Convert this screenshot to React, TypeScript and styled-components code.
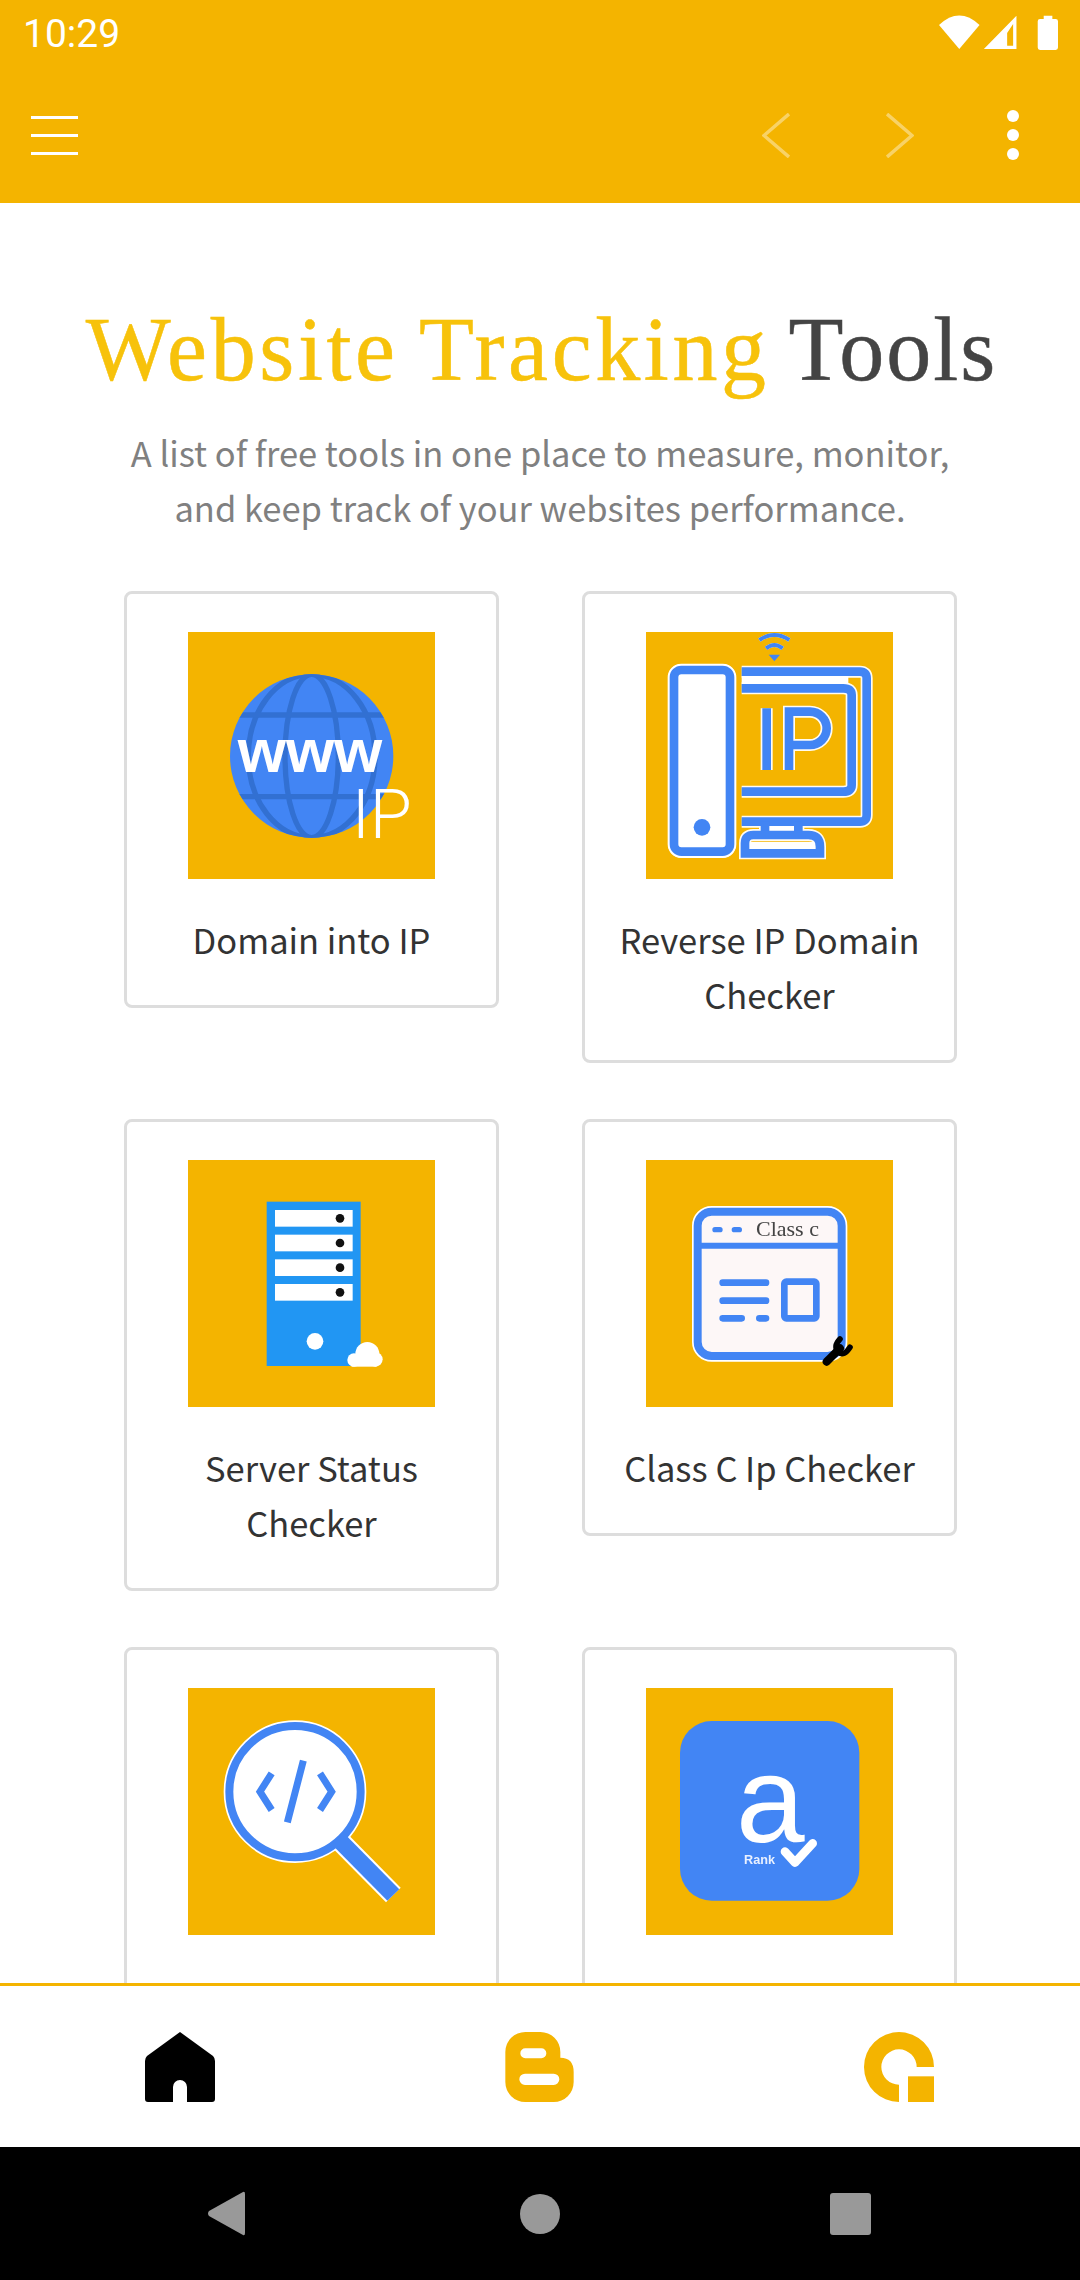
import React from "react"
import styled, { createGlobalStyle } from "styled-components"

const AMBER = "#f4b400"
const BLUE = "#4285f4"

const GlobalStyle = createGlobalStyle`
  html, body {
    margin: 0;
    padding: 0;
    background: #fff;
  }
  body {
    font-family: "Noto Sans CJK JP", "Noto Sans", sans-serif;
  }
`

function GlobeArt() {
  return (
    <Art viewBox="54 36 741 741">
      <clipPath id="globe-clip">
        <circle cx="425" cy="408" r="245" />
      </clipPath>
      <circle cx="425" cy="408" r="245" fill={BLUE} />
      <g clipPath="url(#globe-clip)" fill="none" stroke="#3270d2" strokeWidth="16">
        <ellipse cx="425" cy="408" rx="80" ry="245" />
        <ellipse cx="425" cy="408" rx="190" ry="245" />
        <path d="M170 285H680M170 530H680" />
      </g>
      <text x="203" y="455" fontFamily="Liberation Sans" fontWeight="700" fontSize="186" fill="#fff">
        www
      </text>
      <text x="545" y="655" fontFamily="Roboto" fontWeight="300" fontSize="205" fill="#fff">
        IP
      </text>
    </Art>
  )
}

function ComputerArt() {
  const frames = (
    <>
      <rect x="132" y="150" width="168" height="545" rx="22" />
      <path d="M335 155H690Q710 155 710 175V585Q710 605 690 605H335" />
      <path d="M335 205H640Q665 205 665 225V495Q665 515 640 515H335" />
      <path d="M410 265V450M477 450V275H540A50 50 0 0 1 540 375H477" />
      <path d="M405 605V640M505 605V640" />
      <path d="M345 700V670Q345 645 370 645H535Q570 645 570 680V700Z" />
      <path d="M388 60Q433 30 478 60M408 85Q433 65 458 85" strokeWidth="12" />
    </>
  )
  return (
    <Art viewBox="48 36 741 741">
      <g fill="#fff" stroke="#fff" strokeWidth="38">
        <rect x="132" y="150" width="168" height="545" rx="22" />
      </g>
      <g fill="none" stroke="#fff" strokeWidth="36" opacity="0.95">
        {frames}
      </g>
      <rect x="335" y="168" width="320" height="24" fill="#fff" />
      <rect x="418" y="612" width="74" height="22" fill="#fff" />
      <path d="M355 665H555V690H355Z" fill="#fff" />
      <g fill="none" stroke={BLUE} strokeWidth="26">
        {frames}
      </g>
      <circle cx="216" cy="622" r="25" fill={BLUE} />
      <path d="M416 104H450L433 124Z" fill={BLUE} />
    </Art>
  )
}

function ServerArt() {
  return (
    <Art viewBox="54 30 741 741">
      <rect x="290" y="155" width="282" height="493" fill="#2196f3" />
      {[180, 254, 328, 402].map((y) => (
        <g key={y}>
          <rect x="315" y={y} width="233" height="50" fill="#fff" />
          <circle cx="510" cy={y + 25} r="13" fill="#111" />
        </g>
      ))}
      <circle cx="435" cy="574" r="25" fill="#fff" />
      <g fill="#fff">
        <circle cx="592" cy="612" r="36" />
        <circle cx="552" cy="630" r="20" />
        <circle cx="616" cy="628" r="22" />
        <rect x="545" y="625" width="75" height="25" />
      </g>
    </Art>
  )
}

function ClassCArt() {
  return (
    <Art viewBox="48 30 741 741">
      <rect x="203" y="185" width="432" height="433" rx="42" fill="#fdf7f7" stroke="#fff" strokeWidth="34" />
      <rect x="203" y="185" width="432" height="433" rx="42" fill="#fdf7f7" stroke={BLUE} strokeWidth="24" />
      <path d="M205 287H635" stroke={BLUE} strokeWidth="18" />
      <g stroke={BLUE} strokeWidth="16" strokeLinecap="round">
        <path d="M255 239H270M313 239H328" />
      </g>
      <text x="378" y="258" fontFamily="Liberation Serif" fontSize="66" fill="#444">
        Class c
      </text>
      <g stroke={BLUE} strokeWidth="20" strokeLinecap="round">
        <path d="M278 398H408M278 452H408M278 505H335M388 505H408" />
      </g>
      <rect x="463" y="395" width="96" height="110" rx="6" fill="none" stroke={BLUE} strokeWidth="20" />
      <g fill="none" stroke="#000" strokeLinecap="round">
        <path d="M590 635L630 595" strokeWidth="24" />
        <path d="M630 567Q608 590 626 607Q642 620 660 592" strokeWidth="17" />
      </g>
    </Art>
  )
}

function CodeSearchArt() {
  return (
    <Art viewBox="54 54 741 741">
      <path d="M513 516L670 675" stroke="#fff" strokeWidth="62" />
      <circle cx="375" cy="365" r="197" fill="#fff" stroke="#fff" strokeWidth="34" />
      <circle cx="375" cy="365" r="197" fill="#fff" stroke={BLUE} strokeWidth="24" />
      <path d="M513 516L670 675" stroke={BLUE} strokeWidth="50" />
      <g fill="none" stroke={BLUE} strokeWidth="21">
        <path d="M305 310L270 365L305 420M450 310L485 365L450 420M400 272L352 457" />
      </g>
    </Art>
  )
}

function RankArt() {
  return (
    <Art viewBox="48 54 741 741">
      <rect x="150" y="153" width="538" height="539" rx="95" fill={BLUE} />
      <text x="318" y="516" fontFamily="Liberation Sans" fontSize="370" fill="#fff">
        a
      </text>
      <text x="342" y="582" fontFamily="Liberation Sans" fontWeight="700" fontSize="38" fill="#e8f0ff">
        Rank
      </text>
      <path d="M465 545L495 578L548 520" fill="none" stroke="#fff" strokeWidth="26" strokeLinecap="round" strokeLinejoin="round" />
    </Art>
  )
}

// the last row runs under the bottom bar, its names are out of view
const tools = [
  { id: "domain-ip", label: "Domain into IP", art: <GlobeArt /> },
  { id: "reverse-ip", label: "Reverse IP Domain Checker", art: <ComputerArt /> },
  { id: "server-status", label: "Server Status Checker", art: <ServerArt /> },
  { id: "class-c", label: "Class C Ip Checker", art: <ClassCArt /> },
  { id: "code-search", art: <CodeSearchArt /> },
  { id: "rank", art: <RankArt /> },
]

function App() {
  return (
    <Screen>
      <GlobalStyle />
      <Header>
        <StatusBar>
          <Clock>10:29</Clock>
          <svg width="119" height="35" viewBox="25 30 358 105">
            <path d="M25 60Q86 3 147 60L86 132Z" fill="#fff" />
            <path d="M160 132L258 32V132ZM230 84V122H248V57Z" fill="#fff" fillRule="evenodd" />
            <path d="M340 42V32H366V42H376Q383 42 383 49V128Q383 135 376 135H329Q322 135 322 128V49Q322 42 329 42Z" fill="#fff" />
          </svg>
        </StatusBar>
        <Toolbar>
          <MenuIcon width="47" height="39" viewBox="0 0 47 39">
            <path d="M0 1.5H47M0 19.500H47M0 37.5H47" stroke="#fff" strokeWidth="3" />
          </MenuIcon>
          <ToolbarActions>
            <Arrows>
              <svg width="28" height="45" viewBox="0 0 28 45">
                <path d="M27 1L2 22.5L27 44" fill="none" stroke="#fff" strokeOpacity="0.4" strokeWidth="3.5" />
              </svg>
              <svg width="28" height="45" viewBox="0 0 28 45">
                <path d="M1 1L26 22.5L1 44" fill="none" stroke="#fff" strokeOpacity="0.4" strokeWidth="3.5" />
              </svg>
            </Arrows>
            <svg width="12" height="50" viewBox="0 0 12 50">
              <circle cx="6" cy="6" r="6" fill="#fff" />
              <circle cx="6" cy="25" r="6" fill="#fff" />
              <circle cx="6" cy="44" r="6" fill="#fff" />
            </svg>
          </ToolbarActions>
        </Toolbar>
      </Header>

      <Main>
        <Title>
          <Accent>Website Tracking</Accent> Tools
        </Title>
        <Subtitle>
          A list of free tools in one place to measure, monitor,
          <br />
          and keep track of your websites performance.
        </Subtitle>
        <ToolGrid>
          {tools.map((tool) => (
            <ToolCard key={tool.id}>
              <Tile>{tool.art}</Tile>
              {tool.label && <ToolName>{tool.label}</ToolName>}
            </ToolCard>
          ))}
        </ToolGrid>
      </Main>

      <BottomNav>
        <NavCell>
          <svg width="70" height="70" viewBox="0 0 70 70">
            <path d="M35 0L68 24Q70 26 70 29V67Q70 70 67 70H42V55A7 7 0 0 0 28 55V70H3Q0 70 0 67V29Q0 26 2 24Z" fill="#000" />
          </svg>
        </NavCell>
        <NavCell>
          <svg width="69" height="70" viewBox="45 35 205 210">
            <path
              d="M105 35H150A60 60 0 0 1 210 95V112Q250 112 250 155V185A60 60 0 0 1 190 245H105A60 60 0 0 1 45 185V95A60 60 0 0 1 105 35ZM105 84A15 15 0 0 0 105 114H153A15 15 0 0 0 153 84ZM104 160A17 17 0 0 0 104 194H190A17 17 0 0 0 190 160Z"
              fill={AMBER}
              fillRule="evenodd"
            />
          </svg>
        </NavCell>
        <NavCell>
          <svg width="70" height="70" viewBox="42 35 210 210">
            <path d="M147 245A105 105 0 1 1 252 140H200A53 53 0 1 0 147 193Z" fill={AMBER} />
            <rect x="174" y="168" width="78" height="77" fill={AMBER} />
          </svg>
        </NavCell>
      </BottomNav>

      <SystemNav>
        <svg width="38" height="45" viewBox="0 0 38 45">
          <path d="M36 1Q38 0 38 3V42Q38 45 36 44L2 25Q0 22.500 2 20Z" fill="#999" />
        </svg>
        <HomeDot />
        <RecentSquare />
      </SystemNav>
    </Screen>
  )
}

const Screen = styled.div`
  width: 1080px;
  height: 2280px;
  display: flex;
  flex-direction: column;
  overflow: hidden;
  background: #fff;
`

const Header = styled.header`
  height: 203px;
  flex: none;
  background: ${AMBER};
`

const StatusBar = styled.div`
  height: 67px;
  padding: 15px 22px 0 23px;
  box-sizing: border-box;
  display: flex;
  justify-content: space-between;
  align-items: flex-start;
`

const Clock = styled.span`
  font-family: Roboto, sans-serif;
  font-size: 39px;
  line-height: 39px;
  color: #fff;
`

const Toolbar = styled.div`
  height: 136px;
  padding: 0 61px 0 31px;
  display: flex;
  align-items: center;
  justify-content: space-between;
`

const MenuIcon = styled.svg`
  display: block;
`

const ToolbarActions = styled.div`
  display: flex;
  align-items: center;
  gap: 93px;
`

const Arrows = styled.div`
  display: flex;
  align-items: center;
  gap: 96px;
`

const Main = styled.main`
  flex: 1;
  min-height: 0;
  overflow: hidden;
`

const Title = styled.h1`
  margin: 0;
  padding: 97px 0 0 3px;
  font-family: "Liberation Serif", serif;
  font-weight: 400;
  font-size: 90px;
  line-height: 100px;
  letter-spacing: 2px;
  word-spacing: -4px;
  -webkit-text-stroke: 0.5px currentColor;
  color: #444;
  text-align: center;
`

const Accent = styled.span`
  color: #f7c20b;
  letter-spacing: 3.6px;
`

const Subtitle = styled.p`
  margin: 25px 0 0;
  font-size: 34.5px;
  line-height: 55px;
  color: #808080;
  text-align: center;
`

const ToolGrid = styled.div`
  display: grid;
  grid-template-columns: 375px 375px;
  column-gap: 83px;
  row-gap: 56px;
  align-items: start;
  padding: 56px 0 0 124px;
`

const ToolCard = styled.div`
  box-sizing: border-box;
  min-height: 417px;
  border: 3px solid #ddd;
  border-radius: 8px;
  padding: 38px 20px;
  display: flex;
  flex-direction: column;
  align-items: center;
`

const Tile = styled.div`
  width: 247px;
  height: 247px;
  background: ${AMBER};
  flex: none;
`

const Art = styled.svg`
  display: block;
  width: 247px;
  height: 247px;
  filter: blur(0.6px);
`

const ToolName = styled.div`
  margin-top: 33px;
  font-size: 34.5px;
  line-height: 55px;
  color: #333;
  text-align: center;
`

const BottomNav = styled.nav`
  height: 164px;
  flex: none;
  box-sizing: border-box;
  border-top: 3px solid ${AMBER};
  padding-right: 1px;
  background: #fff;
  display: grid;
  grid-template-columns: repeat(3, 1fr);
`

const NavCell = styled.div`
  display: flex;
  align-items: center;
  justify-content: center;
`

const SystemNav = styled.div`
  height: 133px;
  flex: none;
  padding-left: 207px;
  background: #000;
  display: flex;
  align-items: center;
`

const HomeDot = styled.div`
  width: 40px;
  height: 40px;
  margin: 0 270px 0 275px;
  border-radius: 50%;
  background: #999;
`

const RecentSquare = styled.div`
  width: 41px;
  height: 42px;
  border-radius: 3px;
  background: #999;
`

export default App
